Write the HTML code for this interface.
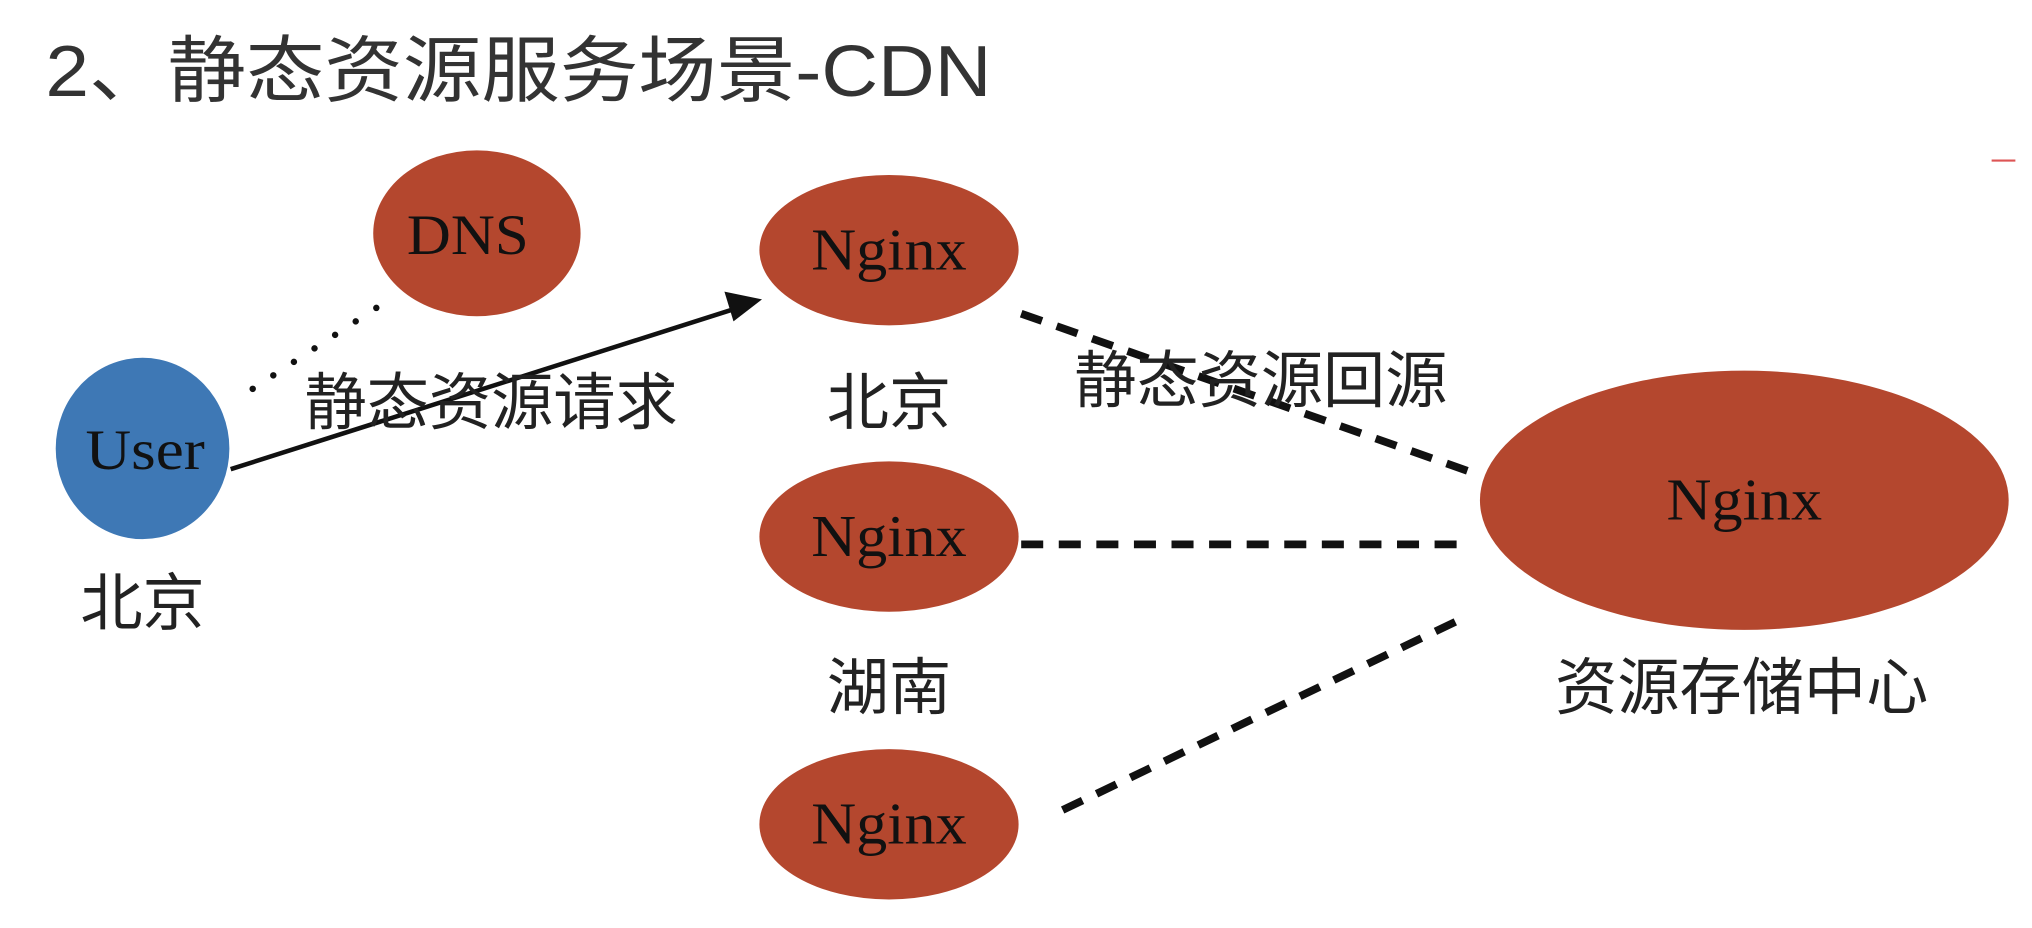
<!DOCTYPE html>
<html><head><meta charset="utf-8"><style>
html,body{margin:0;padding:0;background:#fff;width:2032px;height:928px;overflow:hidden}
svg{display:block}
.cn{font-family:"Liberation Sans","Noto Sans CJK SC",sans-serif;fill:#222}
.tm{font-family:"Liberation Serif",serif;fill:#111}
</style></head><body>
<svg width="2032" height="928" viewBox="0 0 1568 716" preserveAspectRatio="none">
<text x="35" y="74" class="cn" font-size="56" style="fill:#333" textLength="730" lengthAdjust="spacingAndGlyphs">2、静态资源服务场景-CDN</text>
<text x="1536" y="132" font-size="20" fill="#d55" font-family="Liberation Sans,sans-serif">一</text>
<line x1="195" y1="300" x2="305" y2="228" stroke="#111" stroke-width="5" stroke-dasharray="0 19" stroke-linecap="round"/>
<line x1="178" y1="362" x2="568" y2="238" stroke="#111" stroke-width="3.5"/>
<polygon points="588,231 559,225 566,248" fill="#111"/>
<line x1="788" y1="242" x2="1143" y2="367" stroke="#111" stroke-width="6" stroke-dasharray="17 12"/>
<line x1="788" y1="420" x2="1132" y2="420" stroke="#111" stroke-width="6" stroke-dasharray="17 12"/>
<line x1="820" y1="625" x2="1133" y2="475" stroke="#111" stroke-width="6" stroke-dasharray="17 12"/>
<ellipse cx="368" cy="180" rx="80" ry="64" fill="#b4472e"/>
<ellipse cx="686" cy="193" rx="100" ry="58" fill="#b4472e"/>
<ellipse cx="686" cy="414" rx="100" ry="58" fill="#b4472e"/>
<ellipse cx="686" cy="636" rx="100" ry="58" fill="#b4472e"/>
<ellipse cx="1346" cy="386" rx="204" ry="100" fill="#b4472e"/>
<ellipse cx="110" cy="346" rx="67" ry="70" fill="#3e78b5"/>
<text x="361" y="196" class="tm" font-size="44" text-anchor="middle" textLength="94" lengthAdjust="spacingAndGlyphs">DNS</text>
<text x="686" y="208" class="tm" font-size="46" text-anchor="middle" textLength="120" lengthAdjust="spacingAndGlyphs">Nginx</text>
<text x="686" y="429" class="tm" font-size="46" text-anchor="middle" textLength="120" lengthAdjust="spacingAndGlyphs">Nginx</text>
<text x="686" y="651" class="tm" font-size="46" text-anchor="middle" textLength="120" lengthAdjust="spacingAndGlyphs">Nginx</text>
<text x="1346" y="401" class="tm" font-size="46" text-anchor="middle" textLength="120" lengthAdjust="spacingAndGlyphs">Nginx</text>
<text x="112" y="362" class="tm" font-size="44" text-anchor="middle" textLength="92" lengthAdjust="spacingAndGlyphs">User</text>
<text x="110" y="482" class="cn" font-size="48" text-anchor="middle">北京</text>
<text x="686" y="327" class="cn" font-size="48" text-anchor="middle">北京</text>
<text x="686" y="547" class="cn" font-size="48" text-anchor="middle">湖南</text>
<text x="1344" y="547" class="cn" font-size="48" text-anchor="middle">资源存储中心</text>
<text x="235" y="327" class="cn" font-size="48">静态资源请求</text>
<text x="829" y="310" class="cn" font-size="48">静态资源回源</text>
</svg>
</body></html>
